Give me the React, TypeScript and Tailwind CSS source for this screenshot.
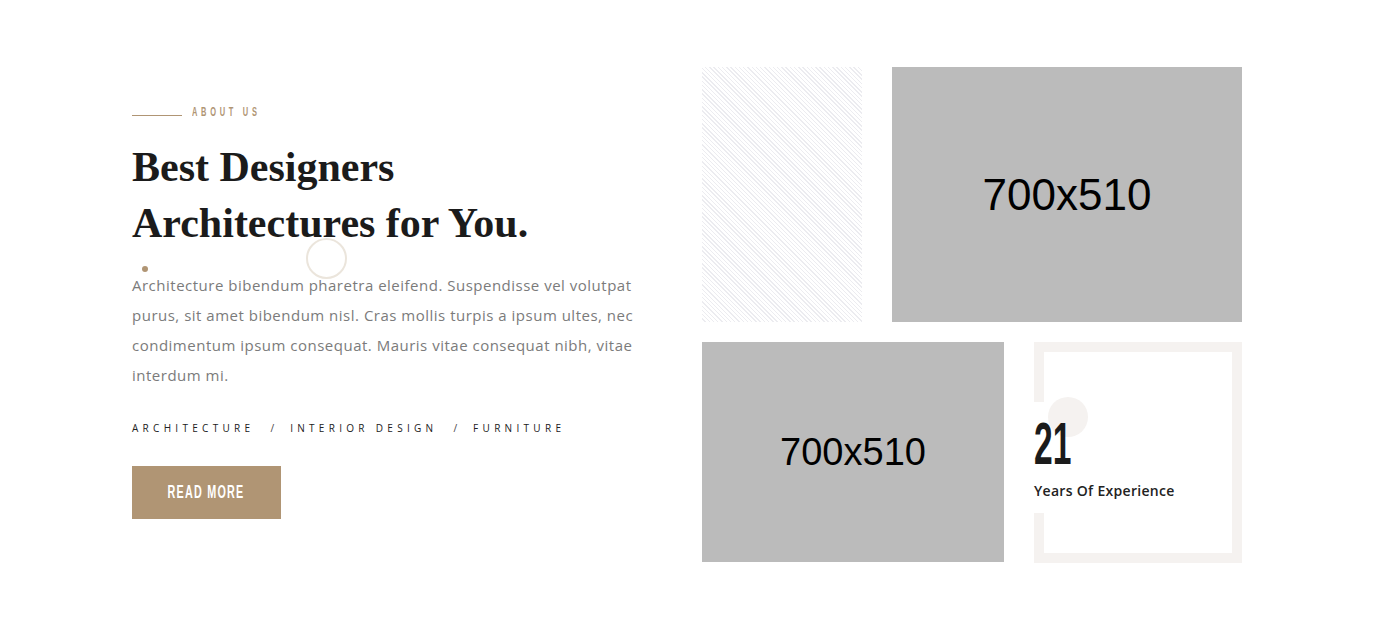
import React from "react";

export default function App() {
  return (
    <div className="w-[1389px] h-[628px] bg-white overflow-hidden font-['Open_Sans',sans-serif]">
      <div className="flex pl-[132px] pt-[67px]">
        {/* Left column */}
        <div className="relative w-[570px] shrink-0">
          <div className="mt-[38px] flex items-center h-[14px]">
            <div className="relative top-[3px] w-[50px] h-px bg-[#b09574]" />
            <span className="ml-[10px] inline-block origin-left scale-x-[0.62] font-['Liberation_Sans',sans-serif] font-bold text-[12px] leading-none tracking-[6px] text-[#b09574] whitespace-nowrap">
              ABOUT US
            </span>
          </div>

          <h2 className="mt-[20px] font-['Liberation_Serif',serif] font-bold text-[42px] leading-[56px] text-[#1b1b1b]">
            Best Designers
            <br />
            Architectures for You.
          </h2>

          {/* decorations */}
          <div className="absolute left-[10px] top-[199px] w-[6px] h-[6px] rounded-full bg-[#b09574]" />
          <div className="absolute left-[174px] top-[171px] w-[41px] h-[41px] rounded-full border-2 border-[#ebe5dc]" />

          <p className="mt-[19px] w-[512px] text-[15px] leading-[30px] tracking-[0.5px] text-[#7b7b7b]">
            Architecture bibendum pharetra eleifend. Suspendisse vel volutpat purus, sit amet bibendum nisl. Cras mollis turpis a ipsum ultes, nec condimentum ipsum consequat. Mauris vitae consequat nibh, vitae interdum mi.
          </p>

          <div className="mt-[30px] flex items-center h-[16px] gap-[16px] text-[10px] font-medium tracking-[4.3px] text-[#222] whitespace-nowrap">
            <span>ARCHITECTURE</span>
            <span className="text-[#444] tracking-normal">/</span>
            <span>INTERIOR DESIGN</span>
            <span className="text-[#444] tracking-normal">/</span>
            <span>FURNITURE</span>
          </div>

          <button className="mt-[30px] w-[149px] h-[53px] bg-[#b09574] flex items-center justify-center">
            <span className="inline-block scale-x-[0.6] font-['Liberation_Sans',sans-serif] font-bold text-[18px] tracking-[2px] text-white whitespace-nowrap">
              READ MORE
            </span>
          </button>
        </div>

        {/* Right column */}
        <div className="w-[540px] shrink-0">
          <div className="flex gap-[30px]">
            <div className="w-[160px] h-[255px] bg-[repeating-linear-gradient(45deg,#ffffff_0px,#ffffff_2px,#ececf0_2px,#ececf0_3px)]" />
            <div className="w-[350px] h-[255px] bg-[#bbbbbb] flex items-center justify-center font-['Liberation_Sans',sans-serif] text-[44px] text-black">
              700x510
            </div>
          </div>
          <div className="mt-[20px] flex gap-[30px]">
            <div className="w-[302px] h-[220px] bg-[#bbbbbb] flex items-center justify-center font-['Liberation_Sans',sans-serif] text-[38px] text-black">
              700x510
            </div>
            <div className="relative w-[208px] h-[221px] border-[10px] border-[#f5f2f0]">
              <div className="absolute -left-[10px] top-[50px] w-[10px] h-[111px] bg-white" />
              <div className="absolute left-[4px] top-[45px] w-[40px] h-[40px] rounded-full bg-[#f5f2f0]" />
              <div className="absolute -left-[10px] top-[62px] flex flex-col">
                <span className="relative inline-block origin-left scale-x-[0.56] font-['Liberation_Sans',sans-serif] font-bold text-[60px] leading-[60px] text-[#1b1b1b]">
                  21
                </span>
                <span className="mt-[6px] text-[14px] font-semibold tracking-[0.3px] text-[#222] whitespace-nowrap">
                  Years Of Experience
                </span>
              </div>
            </div>
          </div>
        </div>
      </div>
    </div>
  );
}
